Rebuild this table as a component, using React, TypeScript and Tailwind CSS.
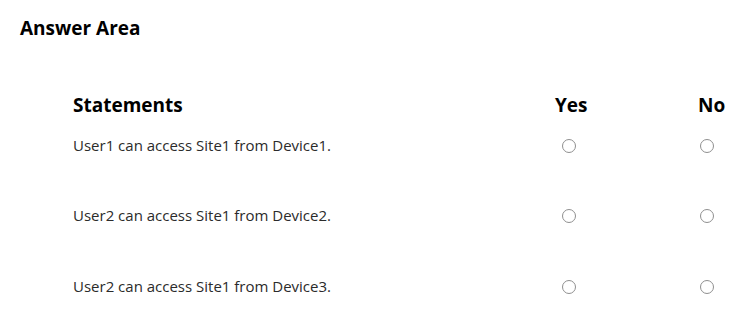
import React from 'react';

const statements = [
  'User1 can access Site1 from Device1.',
  'User2 can access Site1 from Device2.',
  'User2 can access Site1 from Device3.',
];

const Radio: React.FC = () => (
  <div className="w-[14px] h-[14px] rounded-full border-[1.5px] border-[#8f8f8f] bg-white" />
);

export default function App() {
  return (
    <div className="w-[752px] h-[321px] bg-white font-['Open_Sans',sans-serif] text-black overflow-hidden">
      <div className="pl-[20px] pt-[15px] text-[19px] leading-[26px] font-bold">Answer Area</div>

      <div className="pl-[73px] pt-[51px]">
        {/* Header */}
        <div className="flex items-center h-[26px] text-[19px] font-bold">
          <div className="w-[482px]">Statements</div>
          <div className="w-[143px]">Yes</div>
          <div>No</div>
        </div>

        {/* Rows */}
        {statements.map((s, i) => (
          <div
            key={i}
            className={`flex items-center h-[20px] ${i === 0 ? 'mt-[17px]' : i === 1 ? 'mt-[50px]' : 'mt-[51px]'}`}
          >
            <div className="w-[482px] text-[15px] text-[#2b2b2b]">{s}</div>
            <div className="w-[143px] pl-[7px] pt-[2px]">
              <Radio />
            </div>
            <div className="pl-[2px] pt-[2px]">
              <Radio />
            </div>
          </div>
        ))}
      </div>
    </div>
  );
}
